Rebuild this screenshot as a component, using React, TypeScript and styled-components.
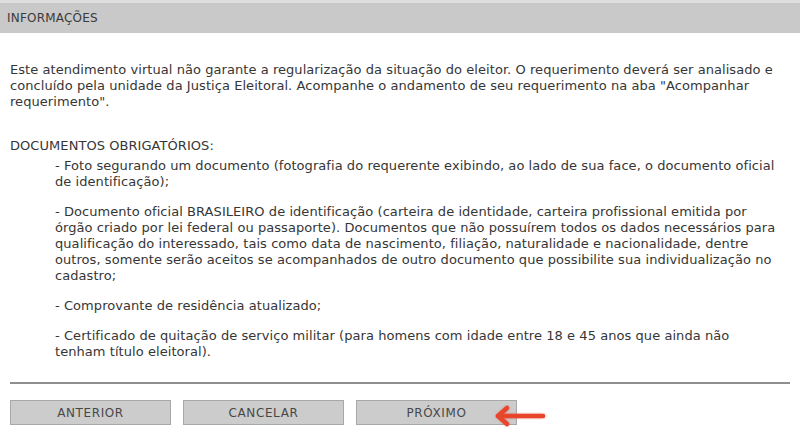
import React from "react";
import styled, { createGlobalStyle } from "styled-components";

const GlobalStyle = createGlobalStyle`
  html, body {
    margin: 0;
    padding: 0;
    background: #ffffff;
  }
  body {
    font-family: "DejaVu Sans", Tahoma, Verdana, sans-serif;
    font-size: 13px;
    color: #363636;
  }
`;

const Page = styled.div`
  width: 800px;
  height: 448px;
  background: #fff;
  overflow: hidden;
`;

const Header = styled.div`
  height: 30px;
  border-top: 3px solid #dedede;
  background: #c9c9c9;
  display: flex;
  align-items: center;
  padding-left: 7px;
  font-size: 12px;
  letter-spacing: 0.2px;
  color: #3a3a3a;
`;

const Content = styled.div`
  padding: 29px 10px 0 10px;
`;

const Paragraph = styled.p`
  margin: 0;
  line-height: 16px;
  letter-spacing: 0.06px;
  white-space: nowrap;
`;

const SectionTitle = styled.div`
  margin-top: 28px;
  line-height: 16px;
  letter-spacing: 0.06px;
`;

const DocList = styled.ul`
  list-style: none;
  margin: 4px 0 0 0;
  padding: 0 0 0 45px;
`;

const DocItem = styled.li`
  line-height: 16px;
  letter-spacing: 0.06px;
  white-space: nowrap;
  & + & {
    margin-top: 14px;
  }
`;

const Divider = styled.hr`
  margin: 22px 0 0 0;
  border: none;
  border-top: 2px solid #8e8e8e;
  height: 0;
`;

const ButtonRow = styled.div`
  position: relative;
  display: flex;
  gap: 12px;
  margin-top: 16px;
`;

const NavButton = styled.button`
  width: 161px;
  height: 25px;
  background: #cccccc;
  border: 1px solid #a8a8a8;
  color: #484848;
  font-family: inherit;
  font-size: 12px;
  letter-spacing: 0.6px;
  padding: 0;
  cursor: pointer;
`;

const Pointer = styled.svg`
  position: absolute;
  left: 483px;
  top: 5px;
  filter: drop-shadow(0 0 1px rgba(232, 69, 44, 0.5));
`;

function RedArrow() {
  return (
    <Pointer width="54" height="22" viewBox="0 0 54 22">
      <g stroke="#e8462c" strokeWidth="4.5" strokeLinecap="round" strokeLinejoin="round" fill="none">
        <path d="M5 11 H50" />
        <path d="M14 3 L5 11 L14 19" />
      </g>
    </Pointer>
  );
}

export default function App() {
  return (
    <Page>
      <GlobalStyle />
      <Header>INFORMAÇÕES</Header>
      <Content>
        <Paragraph>
          Este atendimento virtual não garante a regularização da situação do eleitor. O requerimento deverá ser analisado e
          <br />
          concluído pela unidade da Justiça Eleitoral. Acompanhe o andamento de seu requerimento na aba "Acompanhar
          <br />
          requerimento".
        </Paragraph>
        <SectionTitle>DOCUMENTOS OBRIGATÓRIOS:</SectionTitle>
        <DocList>
          <DocItem>
            - Foto segurando um documento (fotografia do requerente exibindo, ao lado de sua face, o documento oficial
            <br />
            de identificação);
          </DocItem>
          <DocItem>
            - Documento oficial BRASILEIRO de identificação (carteira de identidade, carteira profissional emitida por
            <br />
            órgão criado por lei federal ou passaporte). Documentos que não possuírem todos os dados necessários para
            <br />
            qualificação do interessado, tais como data de nascimento, filiação, naturalidade e nacionalidade, dentre
            <br />
            outros, somente serão aceitos se acompanhados de outro documento que possibilite sua individualização no
            <br />
            cadastro;
          </DocItem>
          <DocItem>- Comprovante de residência atualizado;</DocItem>
          <DocItem>
            - Certificado de quitação de serviço militar (para homens com idade entre 18 e 45 anos que ainda não
            <br />
            tenham título eleitoral).
          </DocItem>
        </DocList>
        <Divider />
        <ButtonRow>
          <NavButton>ANTERIOR</NavButton>
          <NavButton>CANCELAR</NavButton>
          <NavButton>PRÓXIMO</NavButton>
          <RedArrow />
        </ButtonRow>
      </Content>
    </Page>
  );
}
